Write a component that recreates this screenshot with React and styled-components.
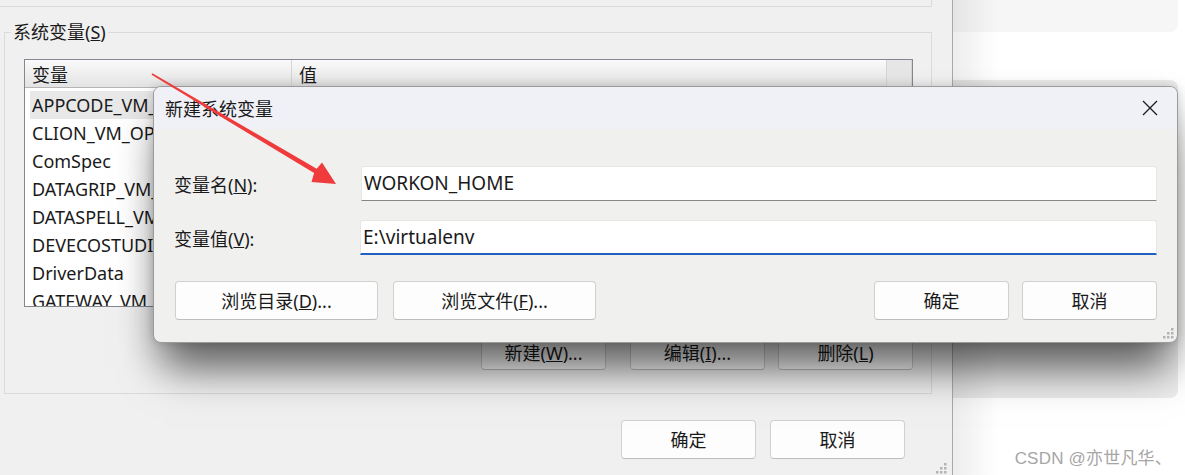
import React from 'react';
import styled, { createGlobalStyle } from 'styled-components';

const GlobalStyle = createGlobalStyle`
    html, body {
        margin: 0;
        padding: 0;
        background: #ffffff;
    }
    body {
        font-family: "Noto Sans", "Noto Sans CJK SC", sans-serif;
        font-size: 18px;
        color: #1a1a1a;
    }
`;

const Desktop = styled.div`
    position: relative;
    width: 1185px;
    height: 475px;
    overflow: hidden;
    display: flex;
`;

const BackWindow = styled.div`
    position: relative;
    width: 953px;
    flex-shrink: 0;
    background: #f0f0f0;
    border-right: 1px solid #a9a9a9;
    box-sizing: border-box;
    padding: 0 20px 0 4px;
    display: flex;
    flex-direction: column;
`;

const UpperGroupTail = styled.div`
    height: 6px;
    margin-left: -4px;
    border-right: 1px solid #dadada;
    border-bottom: 1px solid #dadada;
`;

const GroupBox = styled.fieldset`
    margin: 13px 0 0 0;
    padding: 15px 18px 23px 19px;
    border: 1px solid #dadada;
    min-inline-size: 0;
`;

const Legend = styled.legend`
    margin-left: -13px;
    padding: 0 2px;
    line-height: 24px;
    font-size: 18px;
`;

const ListView = styled.div`
    height: 248px;
    box-sizing: border-box;
    border: 1px solid #828790;
    background: #ffffff;
    overflow: hidden;
`;

const HeaderRow = styled.div`
    display: grid;
    grid-template-columns: 267px 595px 1fr;
    height: 27px;
    background: linear-gradient(#fafafa, #e3e3e3);
    border-bottom: 1px solid #b5b5b5;
`;

const HeaderCell = styled.div`
    padding: 3px 0 0 7px;
    line-height: 24px;
    border-right: 1px solid #d5d5d5;
    background: ${p => (p.$filler ? '#e6e6e6' : 'transparent')};
`;

const Rows = styled.div`
    padding: 3px 0 0 5px;
`;

const Row = styled.div`
    height: 28px;
    line-height: 28px;
    padding-left: 2px;
    white-space: nowrap;
    background: ${p => (p.$selected ? '#e8e8e8' : 'transparent')};
`;

const ButtonRow = styled.div`
    display: flex;
    justify-content: flex-end;
    gap: ${p => p.$gap || 13}px;
    margin-top: ${p => p.$top || 0}px;
    padding-right: ${p => p.$right || 0}px;
`;

const WinButton = styled.button`
    width: ${p => p.$w || 135}px;
    height: ${p => p.$h || 39}px;
    flex-shrink: 0;
    box-sizing: border-box;
    margin-right: ${p => p.$after || 0}px;
    background: #fdfdfd;
    border: 1px solid #d0d0d0;
    border-bottom-color: #bdbdbd;
    border-radius: 4px;
    font-family: "Noto Sans", "Noto Sans CJK SC", sans-serif;
    font-size: 18px;
    color: #1a1a1a;
    padding: 0;
    line-height: 1;
`;

const RightPane = styled.div`
    position: relative;
    flex: 1;
    background: #ffffff;
    padding-right: 7px;
    &::after {
        content: '';
        position: absolute;
        inset: 0;
        background: linear-gradient(to right, rgba(0, 0, 0, 0.07), rgba(0, 0, 0, 0) 45px);
        pointer-events: none;
    }
`;

const Card = styled.div`
    height: ${p => p.$h}px;
    margin-top: ${p => p.$top || 0}px;
    background: ${p => p.$bg};
    border-radius: 0 ${p => (p.$top ? 8 : 0)}px 8px 0;
`;

const Dialog = styled.div`
    position: absolute;
    z-index: 2;
    left: 153px;
    top: 86px;
    width: 1025px;
    height: 257px;
    box-sizing: border-box;
    border: 1px solid #9b9b9b;
    border-radius: 8px;
    background: #f0f0ef;
    overflow: hidden;
    box-shadow: 0 38px 40px -12px rgba(0, 0, 0, 0.5), 0 18px 36px rgba(0, 0, 0, 0.2), 0 0 10px rgba(0, 0, 0, 0.15);
`;

const TitleBar = styled.div`
    height: 42px;
    display: flex;
    align-items: center;
    justify-content: space-between;
    padding: 0 19px 0 11px;
    background: #f0f1f7;
    font-size: 18px;
`;

const DialogBody = styled.div`
    padding: 37px 20px 0 20px;
`;

const FormGrid = styled.div`
    display: grid;
    grid-template-columns: 187px 1fr;
    row-gap: 19px;
    align-items: center;
`;

const Label = styled.div`
    font-size: 18px;
`;

const Field = styled.div`
    height: 35px;
    box-sizing: border-box;
    background: #ffffff;
    border: 1px solid #e6e6e6;
    border-bottom: ${p => (p.$focused ? '2px solid #1f60c0' : '1px solid #868686')};
    margin-left: ${p => (p.$focused ? -1 : 0)}px;
    padding-left: 2px;
    line-height: 33px;
    font-size: 19px;
    border-radius: 3px 3px 0 0;
`;

const DialogButtons = styled.div`
    display: flex;
    margin-top: 26px;
    padding-left: 1px;
    gap: 15px;
`;

const Spacer = styled.div`
    flex: 1;
`;

const Grip = styled.svg`
    position: absolute;
    right: ${p => p.$r}px;
    bottom: ${p => p.$b}px;
`;

const Arrow = styled.svg`
    position: absolute;
    z-index: 3;
    left: 0;
    top: 0;
    pointer-events: none;
`;

const Watermark = styled.div`
    position: absolute;
    z-index: 3;
    right: 13px;
    bottom: 6px;
    font-family: "Liberation Sans", "Noto Sans CJK SC", sans-serif;
    font-size: 17px;
    color: #a6a6a6;
    text-shadow: 0 0 1px #ffffff;
    letter-spacing: 0.2px;
`;

const variables = [
    'APPCODE_VM_OPTIONS',
    'CLION_VM_OPTIONS',
    'ComSpec',
    'DATAGRIP_VM_OPTIONS',
    'DATASPELL_VM_OPTIONS',
    'DEVECOSTUDIO_VM_OPTIONS',
    'DriverData',
    'GATEWAY_VM_OPTIONS',
];

const GripDots = ({ r, b }) => (
    <Grip $r={r} $b={b} width="12" height="12" viewBox="0 0 12 12">
        {[[8, 0], [4, 4], [8, 4], [0, 8], [4, 8], [8, 8]].map(([x, y]) => (
            <rect key={`${x}-${y}`} x={x} y={y} width="2.5" height="2.5" fill="#b3b3b3" />
        ))}
    </Grip>
);

const App = () => {
    return (
        <Desktop>
            <GlobalStyle />
            <BackWindow>
                <UpperGroupTail />
                <GroupBox>
                    <Legend>系统变量(<u>S</u>)</Legend>
                    <ListView>
                        <HeaderRow>
                            <HeaderCell>变量</HeaderCell>
                            <HeaderCell>值</HeaderCell>
                            <HeaderCell $filler />
                        </HeaderRow>
                        <Rows>
                            {variables.map((v, i) => (
                                <Row key={v} $selected={i === 0}>{v}</Row>
                            ))}
                        </Rows>
                    </ListView>
                    <ButtonRow $top={28} $gap={13} $right={0}>
                        <WinButton $w={125} $h={35} $after={11}>新建(<u>W</u>)...</WinButton>
                        <WinButton $w={135} $h={35}>编辑(<u>I</u>)...</WinButton>
                        <WinButton $w={135} $h={35}>删除(<u>L</u>)</WinButton>
                    </ButtonRow>
                </GroupBox>
                <ButtonRow $top={26} $gap={14} $right={27}>
                    <WinButton>确定</WinButton>
                    <WinButton>取消</WinButton>
                </ButtonRow>
                <GripDots r={4} b={0} />
            </BackWindow>

            <RightPane>
                <Card $h={32} $bg="#f6f6f6" />
                <Card $h={318} $top={48} $bg="#ececec" />
            </RightPane>

            <Dialog>
                <TitleBar>
                    <span>新建系统变量</span>
                    <svg width="16" height="16" viewBox="0 0 16 16">
                        <path d="M1 1 L15 15 M15 1 L1 15" stroke="#1c1c1c" strokeWidth="1.3" fill="none" />
                    </svg>
                </TitleBar>
                <DialogBody>
                    <FormGrid>
                        <Label>变量名(<u>N</u>):</Label>
                        <Field>WORKON_HOME</Field>
                        <Label>变量值(<u>V</u>):</Label>
                        <Field $focused>E:\virtualenv</Field>
                    </FormGrid>
                    <DialogButtons>
                        <WinButton $w={203}>浏览目录(<u>D</u>)...</WinButton>
                        <WinButton $w={203}>浏览文件(<u>F</u>)...</WinButton>
                        <Spacer />
                        <WinButton>确定</WinButton>
                        <WinButton style={{ marginLeft: -2 }}>取消</WinButton>
                    </DialogButtons>
                </DialogBody>
                <GripDots r={2} b={2} />
            </Dialog>

            <Arrow width="1185" height="475" viewBox="0 0 1185 475">
                <polygon
                    points="152.4,73.3 316.7,168.8 322,162.5 336,184 311.5,182 314.1,173.1 151.6,74.7"
                    fill="#ef3b3b"
                />
            </Arrow>

            <Watermark>CSDN @亦世凡华、</Watermark>
        </Desktop>
    );
};

export default App;
